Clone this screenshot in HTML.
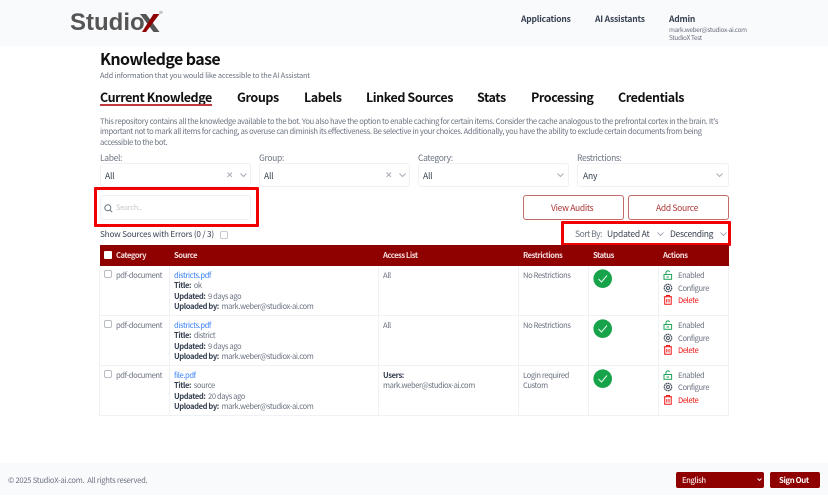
<!DOCTYPE html>
<html><head><meta charset="utf-8"><style>
html,body{margin:0;padding:0;background:#fff}
body{width:828px;height:497px;position:relative;overflow:hidden;font-family:"Noto Sans CJK JP","Liberation Sans",sans-serif;color:#6b7280}
.t{position:absolute;white-space:nowrap;line-height:12px;font-size:8px}
.b{position:absolute;box-sizing:border-box}
.tab{font-size:12.5px;font-weight:700;color:#111;line-height:16px;letter-spacing:-.42px}
.sel{position:absolute;box-sizing:border-box;height:24px;top:163px;border:1px solid #f0f1f3;border-radius:3px;background:#fff}
.lbl{font-size:8.5px;color:#6b7280;letter-spacing:-.35px}
.val{font-size:8.5px;color:#374151;letter-spacing:-.2px}
.k{font-weight:700;color:#374151}
.a{color:#3b82f6}
.r{font-size:7.6px;letter-spacing:-.4px}
.h{font-size:7.6px;font-weight:700;color:#f3dede;letter-spacing:-.45px;top:250px}
.n{font-size:8.5px;font-weight:700;color:#374151;letter-spacing:-.2px;top:13px}
.p{font-size:7.6px;letter-spacing:-.32px}
svg{position:absolute;overflow:visible}
.line{position:absolute;background:#f0f1f3}
</style></head><body>
<div class="b" style="left:0;top:0;width:828px;height:46px;background:#f9fafc"></div>
<div class="t" style="left:70px;top:9px;font-family:'Liberation Sans',sans-serif;font-size:24px;line-height:28px;font-weight:700;color:#555">Studio</div>
<svg style="left:140px;top:14px" width="20" height="18" viewBox="0 0 20 18"><path d="M0 0H6L19.500 18H13.500Z" fill="#555"/><path d="M13.500 0H19.500L6 18H2Z" fill="#8f0000"/></svg>
<div class="t" style="left:159px;top:10px;font-size:8px;line-height:10px;color:#888">®</div>
<div class="t n" style="left:521px">Applications</div>
<div class="t n" style="left:595px">AI Assistants</div>
<div class="t n" style="left:669px">Admin</div>
<div class="t" style="left:669px;top:24px;font-size:6.400px;letter-spacing:-.32px">mark.weber@studiox-ai.com</div>
<div class="t" style="left:669px;top:32px;font-size:6.400px;letter-spacing:-.32px">StudioX Test</div>

<div class="t" style="left:100px;top:47px;font-size:16px;line-height:22px;font-weight:700;color:#111;letter-spacing:-.6px">Knowledge base</div>
<div class="t" style="left:100px;top:70px;font-size:7.400px;letter-spacing:-.2px">Add information that you would like accessible to the AI Assistant</div>

<div class="t tab" style="left:100px;top:89px">Current Knowledge</div>
<div class="b" style="left:100px;top:104px;width:112px;height:1.500px;background:#c0393b"></div>
<div class="t tab" style="left:237px;top:89px">Groups</div>
<div class="t tab" style="left:304px;top:89px">Labels</div>
<div class="t tab" style="left:366px;top:89px">Linked Sources</div>
<div class="t tab" style="left:477px;top:89px">Stats</div>
<div class="t tab" style="left:531px;top:89px">Processing</div>
<div class="t tab" style="left:618px;top:89px">Credentials</div>

<div class="t p" style="left:100px;top:116px">This repository contains all the knowledge available to the bot. You also have the option to enable caching for certain items. Consider the cache analogous to the prefrontal cortex in the brain. It's</div>
<div class="t p" style="left:100px;top:126px">important not to mark all items for caching, as overuse can diminish its effectiveness. Be selective in your choices. Additionally, you have the ability to exclude certain documents from being</div>
<div class="t p" style="left:100px;top:137px">accessible to the bot.</div>

<div class="t lbl" style="left:100px;top:152px">Label:</div>
<div class="t lbl" style="left:259px;top:152px">Group:</div>
<div class="t lbl" style="left:418px;top:152px">Category:</div>
<div class="t lbl" style="left:577px;top:152px">Restrictions:</div>
<div class="sel" style="left:100px;width:151px"></div>
<div class="sel" style="left:259px;width:151px"></div>
<div class="sel" style="left:418px;width:151px"></div>
<div class="sel" style="left:577px;width:152px"></div>
<div class="t val" style="left:105px;top:170px">All</div>
<div class="t val" style="left:264px;top:170px">All</div>
<div class="t val" style="left:423px;top:170px">All</div>
<div class="t val" style="left:583px;top:170px">Any</div>
<svg style="left:227px;top:172px" width="6" height="6"><path d="M.5 .5L5 5M5 .5L.5 5" stroke="#a8adb5" fill="none"/></svg>
<svg style="left:386px;top:172px" width="6" height="6"><path d="M.5 .5L5 5M5 .5L.5 5" stroke="#a8adb5" fill="none"/></svg>
<svg style="left:240px;top:173px" width="8" height="5"><path d="M.5 .5L3.500 3.500L6.500 .5" stroke="#a8adb5" fill="none"/></svg>
<svg style="left:399px;top:173px" width="8" height="5"><path d="M.5 .5L3.500 3.500L6.500 .5" stroke="#a8adb5" fill="none"/></svg>
<svg style="left:557px;top:173px" width="8" height="5"><path d="M.5 .5L3.500 3.500L6.500 .5" stroke="#a8adb5" fill="none"/></svg>
<svg style="left:716px;top:173px" width="8" height="5"><path d="M.5 .5L3.500 3.500L6.500 .5" stroke="#a8adb5" fill="none"/></svg>

<div class="b" style="left:94px;top:187px;width:165px;height:40px;border:3px solid #f00000;border-radius:1px"></div>
<div class="b" style="left:100px;top:195px;width:151px;height:25px;border:1px solid #f0f1f3;border-radius:3px"></div>
<svg style="left:104px;top:204px" width="9" height="9" viewBox="0 0 9 9"><circle cx="3.800" cy="3.800" r="3" stroke="#6b7280" fill="none"/><path d="M6 6L8.200 8.200" stroke="#6b7280"/></svg>
<div class="t" style="left:116px;top:202px;font-size:7.300px;color:#c4c7cc;letter-spacing:-.2px">Search..</div>

<div class="b" style="left:523px;top:195px;width:101px;height:25px;border:1px solid #c46a6a;border-radius:3px"></div>
<div class="b" style="left:628px;top:195px;width:101px;height:25px;border:1px solid #c46a6a;border-radius:3px"></div>
<div class="t" style="left:551px;top:202px;font-size:8.500px;color:#a33;letter-spacing:-.3px">View Audits</div>
<div class="t" style="left:656px;top:202px;font-size:8.500px;color:#a33;letter-spacing:-.3px">Add Source</div>

<div class="t" style="left:100px;top:228px;font-size:8.200px;color:#374151;letter-spacing:-.2px">Show Sources with Errors (0 / 3)</div>
<div class="b" style="left:220px;top:231px;width:8px;height:8px;border:1px solid #c5c8cd;border-radius:2px"></div>

<div class="b" style="left:561px;top:221px;width:170px;height:25px;border:3px solid #f00000;border-radius:1px"></div>
<div class="t" style="left:575px;top:228px;font-size:8.500px;letter-spacing:-.5px">Sort By:</div>
<div class="t" style="left:607px;top:228px;font-size:8.500px;color:#374151;letter-spacing:-.2px">Updated At</div>
<div class="t" style="left:670px;top:228px;font-size:8.500px;color:#374151;letter-spacing:-.3px">Descending</div>
<svg style="left:657px;top:232px" width="8" height="5"><path d="M.5 .5L3.500 3.500L6.500 .5" stroke="#a8adb5" fill="none"/></svg>
<svg style="left:720px;top:232px" width="8" height="5"><path d="M.5 .5L3.500 3.500L6.500 .5" stroke="#a8adb5" fill="none"/></svg>

<div class="b" style="left:100px;top:245px;width:629px;height:21px;background:#8f0000"></div>
<div class="b" style="left:104px;top:251px;width:8px;height:8px;background:#fff;border-radius:1px"></div>
<div class="t h" style="left:116px">Category</div>
<div class="t h" style="left:174px">Source</div>
<div class="t h" style="left:383px">Access List</div>
<div class="t h" style="left:523px">Restrictions</div>
<div class="t h" style="left:593px">Status</div>
<div class="t h" style="left:663px">Actions</div>

<div class="line" style="left:100px;top:315px;width:629px;height:1px"></div>
<div class="line" style="left:100px;top:365px;width:629px;height:1px"></div>
<div class="line" style="left:100px;top:415px;width:629px;height:1px"></div>
<div class="line" style="left:99px;top:266px;width:1px;height:150px"></div>
<div class="line" style="left:169px;top:266px;width:1px;height:150px"></div>
<div class="line" style="left:378px;top:266px;width:1px;height:150px"></div>
<div class="line" style="left:518px;top:266px;width:1px;height:150px"></div>
<div class="line" style="left:588px;top:266px;width:1px;height:150px"></div>
<div class="line" style="left:658px;top:266px;width:1px;height:150px"></div>
<div class="line" style="left:728px;top:266px;width:1px;height:150px"></div>

<!-- row 1 -->
<div class="b" style="left:104px;top:270px;width:8px;height:8px;border:1px solid #b9bcc2;border-radius:2px"></div>
<div class="t r" style="left:116px;top:270px">pdf-document</div>
<div class="t r a" style="left:174px;top:270px">districts.pdf</div>
<div class="t r" style="left:174px;top:280px"><span class="k">Title:</span>&nbsp; ok</div>
<div class="t r" style="left:174px;top:291px"><span class="k">Updated:</span>&nbsp; 9 days ago</div>
<div class="t r" style="left:174px;top:301px"><span class="k">Uploaded by:</span>&nbsp; mark.weber@studiox-ai.com</div>
<div class="t r" style="left:383px;top:270px">All</div>
<div class="t r" style="left:523px;top:270px">No Restrictions</div>
<!-- row 2 -->
<div class="b" style="left:104px;top:320px;width:8px;height:8px;border:1px solid #b9bcc2;border-radius:2px"></div>
<div class="t r" style="left:116px;top:320px">pdf-document</div>
<div class="t r a" style="left:174px;top:320px">districts.pdf</div>
<div class="t r" style="left:174px;top:330px"><span class="k">Title:</span>&nbsp; district</div>
<div class="t r" style="left:174px;top:341px"><span class="k">Updated:</span>&nbsp; 9 days ago</div>
<div class="t r" style="left:174px;top:351px"><span class="k">Uploaded by:</span>&nbsp; mark.weber@studiox-ai.com</div>
<div class="t r" style="left:383px;top:320px">All</div>
<div class="t r" style="left:523px;top:320px">No Restrictions</div>
<!-- row 3 -->
<div class="b" style="left:104px;top:370px;width:8px;height:8px;border:1px solid #b9bcc2;border-radius:2px"></div>
<div class="t r" style="left:116px;top:370px">pdf-document</div>
<div class="t r a" style="left:174px;top:370px">file.pdf</div>
<div class="t r" style="left:174px;top:380px"><span class="k">Title:</span>&nbsp; source</div>
<div class="t r" style="left:174px;top:391px"><span class="k">Updated:</span>&nbsp; 20 days ago</div>
<div class="t r" style="left:174px;top:401px"><span class="k">Uploaded by:</span>&nbsp; mark.weber@studiox-ai.com</div>
<div class="t r k" style="left:383px;top:370px">Users:</div>
<div class="t r" style="left:383px;top:380px">mark.weber@studiox-ai.com</div>
<div class="t r" style="left:523px;top:370px">Login required</div>
<div class="t r" style="left:523px;top:380px">Custom</div>

<!-- status -->
<svg style="left:593px;top:269px" width="20" height="20" viewBox="0 0 20 20"><circle cx="9.700" cy="9.700" r="9.300" fill="#16a34a"/><path d="M5.500 10L8.500 13L14 6.500" stroke="#e8f7ee" stroke-width="1" fill="none"/></svg>
<svg style="left:593px;top:319px" width="20" height="20" viewBox="0 0 20 20"><circle cx="9.700" cy="9.700" r="9.300" fill="#16a34a"/><path d="M5.500 10L8.500 13L14 6.500" stroke="#e8f7ee" stroke-width="1" fill="none"/></svg>
<svg style="left:593px;top:369px" width="20" height="20" viewBox="0 0 20 20"><circle cx="9.700" cy="9.700" r="9.300" fill="#16a34a"/><path d="M5.500 10L8.500 13L14 6.500" stroke="#e8f7ee" stroke-width="1" fill="none"/></svg>

<!-- actions row 1 -->
<svg style="left:663px;top:270px" width="10" height="10" viewBox="0 0 10 10"><rect x="1" y="4.500" width="7.600" height="4.800" fill="none" stroke="#22a55a" stroke-width="1"/><path d="M3 4.500V2.500a1.900 1.900 0 0 1 3.600-.6" fill="none" stroke="#22a55a"/><path d="M3.500 7h2.500" stroke="#22a55a"/></svg>
<div class="t r" style="left:678px;top:270px">Enabled</div>
<svg style="left:663px;top:283px" width="10" height="10" viewBox="0 0 10 10"><circle cx="5" cy="5" r="3.700" fill="none" stroke="#4b5563" stroke-width="1.300" stroke-dasharray="1.600 .5"/><circle cx="5" cy="5" r="1.500" fill="none" stroke="#4b5563"/></svg>
<div class="t r" style="left:678px;top:283px">Configure</div>
<svg style="left:663px;top:295px" width="10" height="10" viewBox="0 0 10 10"><path d="M.8 1.800H9M3.500 1.500V.5H6.500V1.500M1.700 2V9.300H8.200V2M3.800 4V7.500M6 4V7.500" fill="none" stroke="#f01515"/></svg>
<div class="t r" style="left:678px;top:295px;color:#f01515">Delete</div>
<!-- actions row 2 -->
<svg style="left:663px;top:320px" width="10" height="10" viewBox="0 0 10 10"><rect x="1" y="4.500" width="7.600" height="4.800" fill="none" stroke="#22a55a" stroke-width="1"/><path d="M3 4.500V2.500a1.900 1.900 0 0 1 3.600-.6" fill="none" stroke="#22a55a"/><path d="M3.500 7h2.500" stroke="#22a55a"/></svg>
<div class="t r" style="left:678px;top:320px">Enabled</div>
<svg style="left:663px;top:333px" width="10" height="10" viewBox="0 0 10 10"><circle cx="5" cy="5" r="3.700" fill="none" stroke="#4b5563" stroke-width="1.300" stroke-dasharray="1.600 .5"/><circle cx="5" cy="5" r="1.500" fill="none" stroke="#4b5563"/></svg>
<div class="t r" style="left:678px;top:333px">Configure</div>
<svg style="left:663px;top:345px" width="10" height="10" viewBox="0 0 10 10"><path d="M.8 1.800H9M3.500 1.500V.5H6.500V1.500M1.700 2V9.300H8.200V2M3.800 4V7.500M6 4V7.500" fill="none" stroke="#f01515"/></svg>
<div class="t r" style="left:678px;top:345px;color:#f01515">Delete</div>
<!-- actions row 3 -->
<svg style="left:663px;top:370px" width="10" height="10" viewBox="0 0 10 10"><rect x="1" y="4.500" width="7.600" height="4.800" fill="none" stroke="#22a55a" stroke-width="1"/><path d="M3 4.500V2.500a1.900 1.900 0 0 1 3.600-.6" fill="none" stroke="#22a55a"/><path d="M3.500 7h2.500" stroke="#22a55a"/></svg>
<div class="t r" style="left:678px;top:370px">Enabled</div>
<svg style="left:663px;top:382px" width="10" height="10" viewBox="0 0 10 10"><circle cx="5" cy="5" r="3.700" fill="none" stroke="#4b5563" stroke-width="1.300" stroke-dasharray="1.600 .5"/><circle cx="5" cy="5" r="1.500" fill="none" stroke="#4b5563"/></svg>
<div class="t r" style="left:678px;top:382px">Configure</div>
<svg style="left:663px;top:395px" width="10" height="10" viewBox="0 0 10 10"><path d="M.8 1.800H9M3.500 1.500V.5H6.500V1.500M1.700 2V9.300H8.200V2M3.800 4V7.500M6 4V7.500" fill="none" stroke="#f01515"/></svg>
<div class="t r" style="left:678px;top:395px;color:#f01515">Delete</div>

<!-- footer -->
<div class="b" style="left:0;top:463px;width:828px;height:32px;background:#f9fafc"></div>
<div class="t" style="left:8px;top:475px;font-size:7.600px;letter-spacing:-.27px">© 2025 StudioX-ai.com.&nbsp; All rights reserved.</div>
<div class="b" style="left:676px;top:472px;width:88px;height:16px;background:#8f0000;border-radius:2px"></div>
<div class="t" style="left:682px;top:475px;font-size:7.600px;font-weight:500;color:#f5e5e5;letter-spacing:-.4px">English</div>
<svg style="left:757px;top:478px" width="6" height="4"><path d="M.5 .5L2.500 2.500L4.500 .5" stroke="#f5e5e5" fill="none"/></svg>
<div class="b" style="left:770px;top:472px;width:50px;height:16px;background:#8f0000;border-radius:2px"></div>
<div class="t" style="left:779px;top:475px;font-size:7.800px;font-weight:700;color:#fff;letter-spacing:-.4px">Sign Out</div>
</body></html>
